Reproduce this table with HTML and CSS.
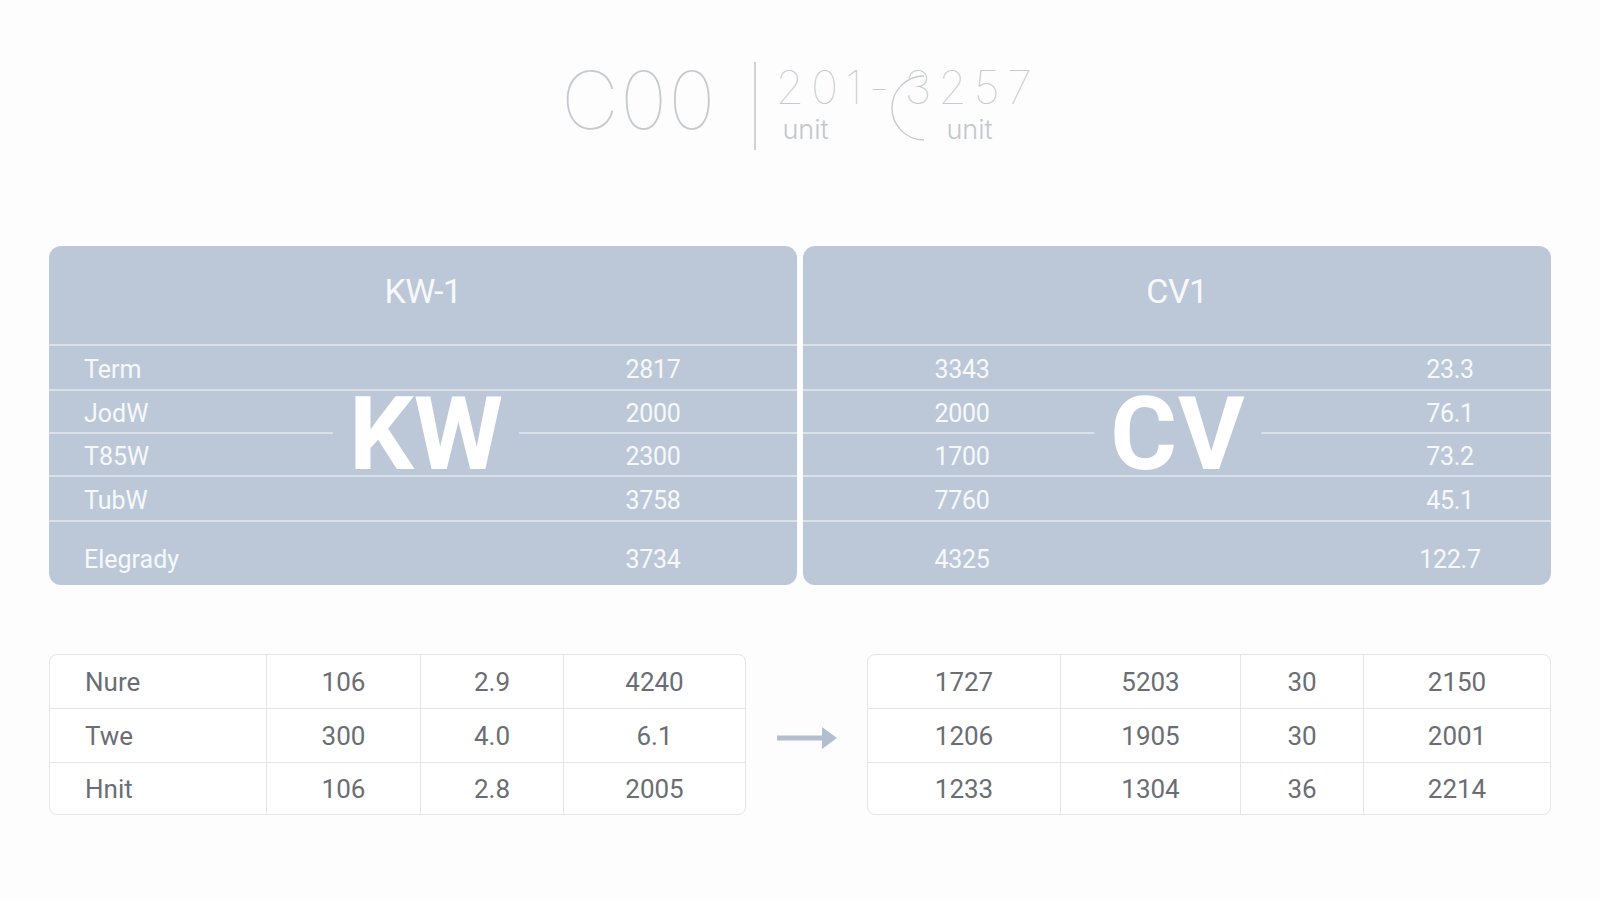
FILE: index.html
```html
<!DOCTYPE html>
<html lang="en">
<head>
<meta charset="utf-8">
<title>KW / CV</title>
<link rel="stylesheet" href="styles.css">
</head>
<body>
<div class="page">
  <header class="head">
    <div class="big">C00</div>
    <div class="divider"></div>
    <div class="range">
      <div class="rcol rcol1">
        <span class="num">201-</span>
        <span class="unit">unit</span>
      </div>
      <svg class="paren" width="36" height="70" viewBox="0 0 36 70" aria-hidden="true">
        <path d="M35 3 A32 32 0 0 0 35 67" fill="none" stroke="#c7cbd0" stroke-width="1.4"/>
      </svg>
      <div class="rcol">
        <span class="num">3257</span>
        <span class="unit unit2">unit</span>
      </div>
    </div>
  </header>

  <section class="panels">
    <div class="panel panel-left">
      <div class="phead">KW-1</div>
      <div class="prow r1"><span class="lbl">Term</span><span class="val">2817</span></div>
      <div class="prow r2"><span class="lbl">JodW</span><span class="val">2000</span></div>
      <div class="prow r3"><span class="lbl">T85W</span><span class="val">2300</span></div>
      <div class="prow r4"><span class="lbl">TubW</span><span class="val">3758</span></div>
      <div class="prow r5"><span class="lbl">Elegrady</span><span class="val">3734</span></div>
      <div class="mark mark-kw">KW</div>
    </div>
    <div class="panel panel-right">
      <div class="phead">CV1</div>
      <div class="prow r1"><span class="val">3343</span><span></span><span class="val">23.3</span></div>
      <div class="prow r2"><span class="val">2000</span><span></span><span class="val">76.1</span></div>
      <div class="prow r3"><span class="val">1700</span><span></span><span class="val">73.2</span></div>
      <div class="prow r4"><span class="val">7760</span><span></span><span class="val">45.1</span></div>
      <div class="prow r5"><span class="val">4325</span><span></span><span class="val">122.7</span></div>
      <div class="mark mark-cv">CV</div>
    </div>
  </section>

  <section class="bottom">
    <div class="tbl tbl-left">
      <div class="c first">Nure</div><div class="c">106</div><div class="c">2.9</div><div class="c last">4240</div>
      <div class="c first">Twe</div><div class="c">300</div><div class="c">4.0</div><div class="c last">6.1</div>
      <div class="c first lastrow">Hnit</div><div class="c lastrow">106</div><div class="c lastrow">2.8</div><div class="c last lastrow">2005</div>
    </div>
    <div class="arrow">
      <svg width="60" height="24" viewBox="0 0 60 24" aria-hidden="true">
        <rect x="0" y="9.5" width="48" height="5" fill="#b3bfce"/>
        <polygon points="45,1 60,12 45,23" fill="#b3bfce"/>
      </svg>
    </div>
    <div class="tbl tbl-right">
      <div class="c">1727</div><div class="c">5203</div><div class="c">30</div><div class="c last">2150</div>
      <div class="c">1206</div><div class="c">1905</div><div class="c">30</div><div class="c last">2001</div>
      <div class="c lastrow">1233</div><div class="c lastrow">1304</div><div class="c lastrow">36</div><div class="c last lastrow">2214</div>
    </div>
  </section>
</div>
</body>
</html>
```

FILE: styles.css
```css
* { box-sizing: border-box; }

html, body {
  margin: 0;
  padding: 0;
  background: #fdfdfd;
  font-family: Roboto, "Liberation Sans", sans-serif;
}

.page {
  width: 1600px;
  height: 900px;
  padding: 0 49px;
}

/* ---------- header ---------- */
.head {
  height: 246px;
  display: flex;
  justify-content: center;
  align-items: flex-start;
  padding-top: 60px;
  color: #c6cacf;
  font-family: Inter, Roboto, sans-serif;
  font-weight: 100;
}

.big {
  font-size: 80px;
  line-height: 1;
  letter-spacing: 1px;
}

.divider {
  width: 2px;
  height: 88px;
  margin: 2px 19px 0 38px;
  background: #cfd2d6;
}

.range {
  display: flex;
  align-items: flex-start;
}

.rcol {
  display: flex;
  flex-direction: column;
  align-items: flex-start;
}

.rcol1 {
  width: 114px;
}

.num {
  font-size: 46px;
  line-height: 1;
  margin-top: 4px;
  letter-spacing: 7px;
  white-space: nowrap;
}

.unit {
  font-size: 27px;
  line-height: 1;
  margin-top: 6px;
  margin-left: 7px;
  font-weight: 300;
  color: #c3c7cc;
}

.unit2 {
  margin-left: 42px;
}

.paren {
  display: block;
  margin-top: 13px;
  margin-right: -21px;
  flex-shrink: 0;
}

/* ---------- panels ---------- */
.panels {
  display: flex;
  gap: 6px;
}

.panel {
  position: relative;
  flex: 1;
  height: 339px;
  background: #bcc8d8;
  border-radius: 12px;
  color: #f6f8fb;
  overflow: hidden;
}

.phead {
  height: 98px;
  display: flex;
  align-items: center;
  justify-content: center;
  padding-bottom: 8px;
  font-size: 34px;
  letter-spacing: -0.5px;
}

.prow {
  border-top: 2px solid #d9e0ea;
  display: grid;
  align-items: center;
  font-size: 25px;
  padding-top: 3px;
}

.r1 { height: 45px; }
.r2 { height: 43px; }
.r3 { height: 43px; }
.r4 { height: 45px; }
.r5 { height: 65px; padding-top: 12px !important; }

.panel-left .prow {
  grid-template-columns: 1fr 110px;
  padding-left: 35px;
  padding-right: 89px;
}

.panel-right .prow {
  grid-template-columns: 110px 1fr 110px;
  padding-left: 104px;
  padding-right: 46px;
}

.val {
  text-align: center;
  letter-spacing: -0.3px;
}

.mark {
  position: absolute;
  top: 152px;
  left: 50%;
  transform: translateX(-50%);
  height: 72px;
  line-height: 72px;
  padding: 0 16px;
  background: #bcc8d8;
  color: #ffffff;
  font-size: 102px;
  font-weight: 700;
}

.mark-kw { margin-left: 3px; }
.mark-cv { margin-left: 1px; letter-spacing: 1px; }

/* ---------- bottom tables ---------- */
.bottom {
  margin-top: 69px;
  display: flex;
  align-items: center;
}

.tbl {
  display: grid;
  border: 1.5px solid #e3e5e9;
  border-radius: 8px;
  background: #ffffff;
  overflow: hidden;
  color: #6a6e74;
  font-size: 26px;
}

.tbl-left {
  width: 697px;
  grid-template-columns: 217px 154px 143px 1fr;
}

.tbl-right {
  width: 684px;
  grid-template-columns: 193px 180px 123px 1fr;
}

.c {
  height: 54px;
  display: flex;
  align-items: center;
  justify-content: center;
  border-right: 1.5px solid #e3e5e9;
  border-bottom: 1.5px solid #e3e5e9;
}

.c.first {
  justify-content: flex-start;
  padding-left: 35px;
}

.c.last { border-right: none; }
.c.lastrow { border-bottom: none; height: 51px; }

.arrow {
  width: 60px;
  margin: 6px 30px 0 31px;
  display: flex;
  align-items: center;
}

.arrow svg { display: block; }
```
